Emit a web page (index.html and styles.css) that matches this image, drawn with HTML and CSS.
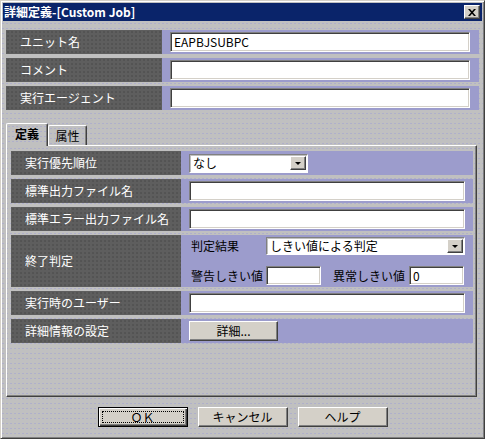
FILE: index.html
```html
<!DOCTYPE html>
<html lang="ja">
<head>
<meta charset="utf-8">
<link rel="stylesheet" href="styles.css">
</head>
<body>
<div class="window">
  <div class="titlebar">
    <span class="title">詳細定義-[Custom Job]</span>
    <span class="close">
      <svg width="8" height="7" viewBox="0 0 8 7"><path d="M0 0h2l2 2.2L6 0h2L5 3.5 8 7H6L4 4.8 2 7H0l3-3.5z" fill="#000"/></svg>
    </span>
  </div>
  <div class="content">
    <div class="form top">
      <div class="label">ユニット名</div>
      <div class="value"><div class="field wide-top">EAPBJSUBPC</div></div>
      <div class="label">コメント</div>
      <div class="value"><div class="field wide-top"></div></div>
      <div class="label">実行エージェント</div>
      <div class="value"><div class="field wide-top"></div></div>
    </div>

    <div class="tabs">
      <div class="tab active">定義</div>
      <div class="tab">属性</div>
    </div>

    <div class="panel">
      <div class="form inner">
        <div class="label">実行優先順位</div>
        <div class="value">
          <div class="combo small"><span class="combo-text">なし</span><span class="drop"><span class="arrow"></span></span></div>
        </div>
        <div class="label">標準出力ファイル名</div>
        <div class="value"><div class="field wide"></div></div>
        <div class="label">標準エラー出力ファイル名</div>
        <div class="value"><div class="field wide"></div></div>
        <div class="label tall">終了判定</div>
        <div class="value judge">
          <div class="line">
            <span class="sublabel">判定結果</span>
            <div class="combo big"><span class="combo-text">しきい値による判定</span><span class="drop"><span class="arrow"></span></span></div>
          </div>
          <div class="line">
            <span class="sublabel">警告しきい値</span>
            <div class="field num"></div>
            <span class="sublabel second">異常しきい値</span>
            <div class="field num">0</div>
          </div>
        </div>
        <div class="label">実行時のユーザー</div>
        <div class="value"><div class="field wide"></div></div>
        <div class="label">詳細情報の設定</div>
        <div class="value"><div class="btn detail">詳細...</div></div>
      </div>
    </div>

    <div class="buttons">
      <div class="btn action default"><span class="focus">ＯＫ</span></div>
      <div class="btn action">キャンセル</div>
      <div class="btn action">ヘルプ</div>
    </div>
  </div>
</div>
</body>
</html>
```

FILE: styles.css
```css
* { box-sizing: border-box; }
html, body { margin: 0; padding: 0; }
body {
  width: 485px;
  height: 439px;
  overflow: hidden;
  background: #c0c0c0;
  font-family: "Noto Sans CJK JP", "Liberation Sans", sans-serif;
  font-size: 12px;
  color: #000;
}

.window {
  width: 485px;
  height: 439px;
  background-color: #c0c0c0;
  background-image: radial-gradient(circle, rgba(130, 130, 230, 0.28) 0.6px, transparent 0.9px);
  background-size: 4px 5px;
  border: 1px solid;
  border-color: #d4d0c8 #404040 #404040 #d4d0c8;
  box-shadow: inset 1px 1px 0 #fff, inset -1px -1px 0 #808080;
  padding: 2px;
  display: flex;
  flex-direction: column;
}

.titlebar {
  height: 18px;
  background: #0a246a;
  display: flex;
  align-items: center;
  justify-content: space-between;
  padding: 0 2px 0 1px;
}
.title {
  color: #fff;
  font-weight: bold;
  font-size: 12px;
  line-height: 18px;
  white-space: nowrap;
}
.close {
  width: 16px;
  height: 14px;
  background: #d4d0c8;
  border: 1px solid;
  border-color: #fff #404040 #404040 #fff;
  box-shadow: inset -1px -1px 0 #808080;
  display: flex;
  align-items: center;
  justify-content: center;
}

.content {
  padding: 9px 3px 0 3px;
  display: flex;
  flex-direction: column;
}

.form {
  display: grid;
  row-gap: 4px;
}
.form.top {
  grid-template-columns: 156px 1fr;
  grid-auto-rows: 24px;
}
.form.inner {
  grid-template-columns: 170px 1fr;
  grid-template-rows: 24px 24px 24px 52px 24px 24px;
}

.label {
  background-color: #5e5e5e;
  background-image: radial-gradient(circle, rgba(40, 40, 40, 0.3) 0.6px, transparent 0.9px);
  background-size: 4px 4px;
  color: #fff;
  display: flex;
  align-items: center;
  white-space: nowrap;
  line-height: 14px;
}
.form.top .label { padding-left: 14px; }
.form.inner .label { padding-left: 14px; }

.value {
  background: #9c9ccc;
  display: flex;
  align-items: center;
  padding-left: 8px;
}

.field {
  height: 20px;
  background: #fff;
  border: 1px solid;
  border-color: #808080 #fff #fff #808080;
  box-shadow: inset 1px 1px 0 #404040, inset -1px -1px 0 #d4d0c8;
  padding-left: 3px;
  line-height: 18px;
  font-size: 12px;
  white-space: nowrap;
  overflow: hidden;
}
.field.wide-top { width: 300px; }
.field.wide { width: 276px; }
.field.num { width: 55px; height: 19px; line-height: 17px; }

.combo {
  height: 19px;
  background: #fff;
  border: 1px solid;
  border-color: #808080 #fff #fff #808080;
  box-shadow: inset 1px 1px 0 #c0c0c0;
  display: flex;
  align-items: center;
  justify-content: space-between;
  padding: 0 1px 0 3px;
}
.combo.small { width: 119px; }
.combo.big { width: 199px; height: 18px; }
.combo-text { line-height: 16px; white-space: nowrap; }
.drop {
  width: 16px;
  height: 14px;
  background: #d4d0c8;
  border: 1px solid;
  border-color: #fff #404040 #404040 #fff;
  box-shadow: inset -1px -1px 0 #808080;
  display: flex;
  align-items: center;
  justify-content: center;
}
.arrow {
  width: 0;
  height: 0;
  border-left: 3px solid transparent;
  border-right: 3px solid transparent;
  border-top: 3px solid #000;
}

.value.judge {
  flex-direction: column;
  align-items: flex-start;
  justify-content: flex-start;
  padding-top: 2px;
  gap: 11px;
}
.line {
  display: flex;
  align-items: center;
}
.sublabel {
  width: 77px;
  padding-left: 2px;
  white-space: nowrap;
  line-height: 14px;
}
.sublabel.second {
  width: auto;
  padding-left: 0;
  margin-left: 12px;
  margin-right: 4px;
}

.tabs {
  margin-top: 13px;
  height: 22px;
  display: flex;
  align-items: flex-end;
}
.tab {
  height: 20px;
  width: 39px;
  border-top: 1px solid #fff;
  border-left: 1px solid #fff;
  border-right: 1px solid #404040;
  box-shadow: inset -1px 0 0 #808080;
  border-radius: 2px 2px 0 0;
  display: flex;
  align-items: center;
  justify-content: center;
  line-height: 14px;
}
.tab.active {
  width: 42px;
  height: 23px;
  margin-bottom: -1px;
  font-weight: bold;
  position: relative;
  z-index: 1;
  background-color: #c0c0c0;
  background-image: radial-gradient(circle, rgba(130, 130, 230, 0.28) 0.6px, transparent 0.9px);
  background-size: 4px 5px;
  padding-bottom: 2px;
}

.panel {
  width: 471px;
  height: 252px;
  border-top: 1px solid #fff;
  border-left: 1px solid #fff;
  border-right: 1px solid #404040;
  border-bottom: 1px solid #404040;
  box-shadow: inset -1px -1px 0 #808080;
  padding: 5px 3px 0 4px;
}

.btn {
  background: #d4d0c8;
  border: 1px solid;
  border-color: #fff #404040 #404040 #fff;
  box-shadow: inset -1px -1px 0 #808080;
  display: flex;
  align-items: center;
  justify-content: center;
  line-height: 14px;
  white-space: nowrap;
}
.btn.detail { width: 89px; height: 20px; }

.buttons {
  margin-top: 10px;
  display: flex;
  justify-content: center;
  gap: 10px;
}
.btn.action { width: 90px; height: 20px; }
.btn.default {
  border: 1px solid #000;
  box-shadow: inset 1px 1px 0 #fff, inset -1px -1px 0 #404040, inset -2px -2px 0 #808080;
  padding: 3px;
}
.focus {
  flex: 1;
  height: 100%;
  border: 1px dotted #000;
  display: flex;
  align-items: center;
  justify-content: center;
}
```
